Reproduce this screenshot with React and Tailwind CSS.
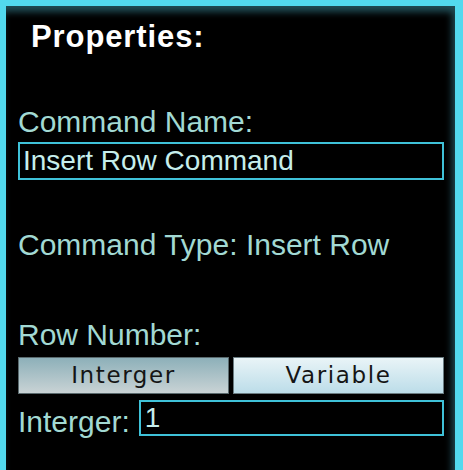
import React from "react";

export default function App() {
  return (
    <div className="w-[463px] h-[470px] overflow-hidden bg-black">
      <div
        className="h-[480px] bg-black border-t-[6px] border-l-[6px] border-r-[8px] border-[#52d9ee] shadow-[inset_-3px_6px_7px_rgba(70,170,190,0.45)] pl-[12px] pr-[11px]"
        style={{ fontFamily: '"Liberation Sans", Arial, sans-serif' }}
      >
        {/* Header */}
        <div className="mt-[15px] ml-[13px] h-[31px] leading-[31px] text-[31px] tracking-[0.9px] font-bold text-white">
          Properties:
        </div>

        {/* Command name */}
        <div className="mt-[55px] h-[29px] leading-[29px] text-[30px] text-[#a2d9d3]">
          Command Name:
        </div>
        <div className="mt-[6px] h-[38px] border-2 border-[#3fc2d9] flex items-center pl-[3px] text-[28px] text-[#c6eeec]">
          Insert Row Command
        </div>

        {/* Command type */}
        <div className="mt-[50px] h-[29px] leading-[29px] text-[30px] text-[#a2d9d3]">
          Command Type: Insert Row
        </div>

        {/* Row number */}
        <div className="mt-[61px] h-[29px] leading-[29px] text-[30px] text-[#a2d9d3]">
          Row Number:
        </div>
        <div
          className="mt-[8px] grid grid-cols-2 gap-[4px] h-[35px] text-[23px] tracking-[1.6px] text-[#151515]"
          style={{ fontFamily: '"DejaVu Sans", Verdana, sans-serif' }}
        >
          <button className="border border-[#5a6a6e] bg-gradient-to-b from-[#8db0b9] to-[#c9d3d5] flex items-center justify-center">
            Interger
          </button>
          <button className="border border-[#6a7c82] bg-gradient-to-b from-[#e9f4f7] to-[#bcdde9] flex items-center justify-center">
            Variable
          </button>
        </div>

        <div className="mt-[8px] flex items-center gap-[9px] h-[36px]">
          <span className="text-[30px] text-[#a2d9d3] leading-[29px] mt-[6px]">Interger:</span>
          <div className="flex-1 h-[36px] border-2 border-[#3fc2d9] flex items-center pl-[4px] text-[28px] text-[#c6eeec]">
            1
          </div>
        </div>
      </div>
    </div>
  );
}
